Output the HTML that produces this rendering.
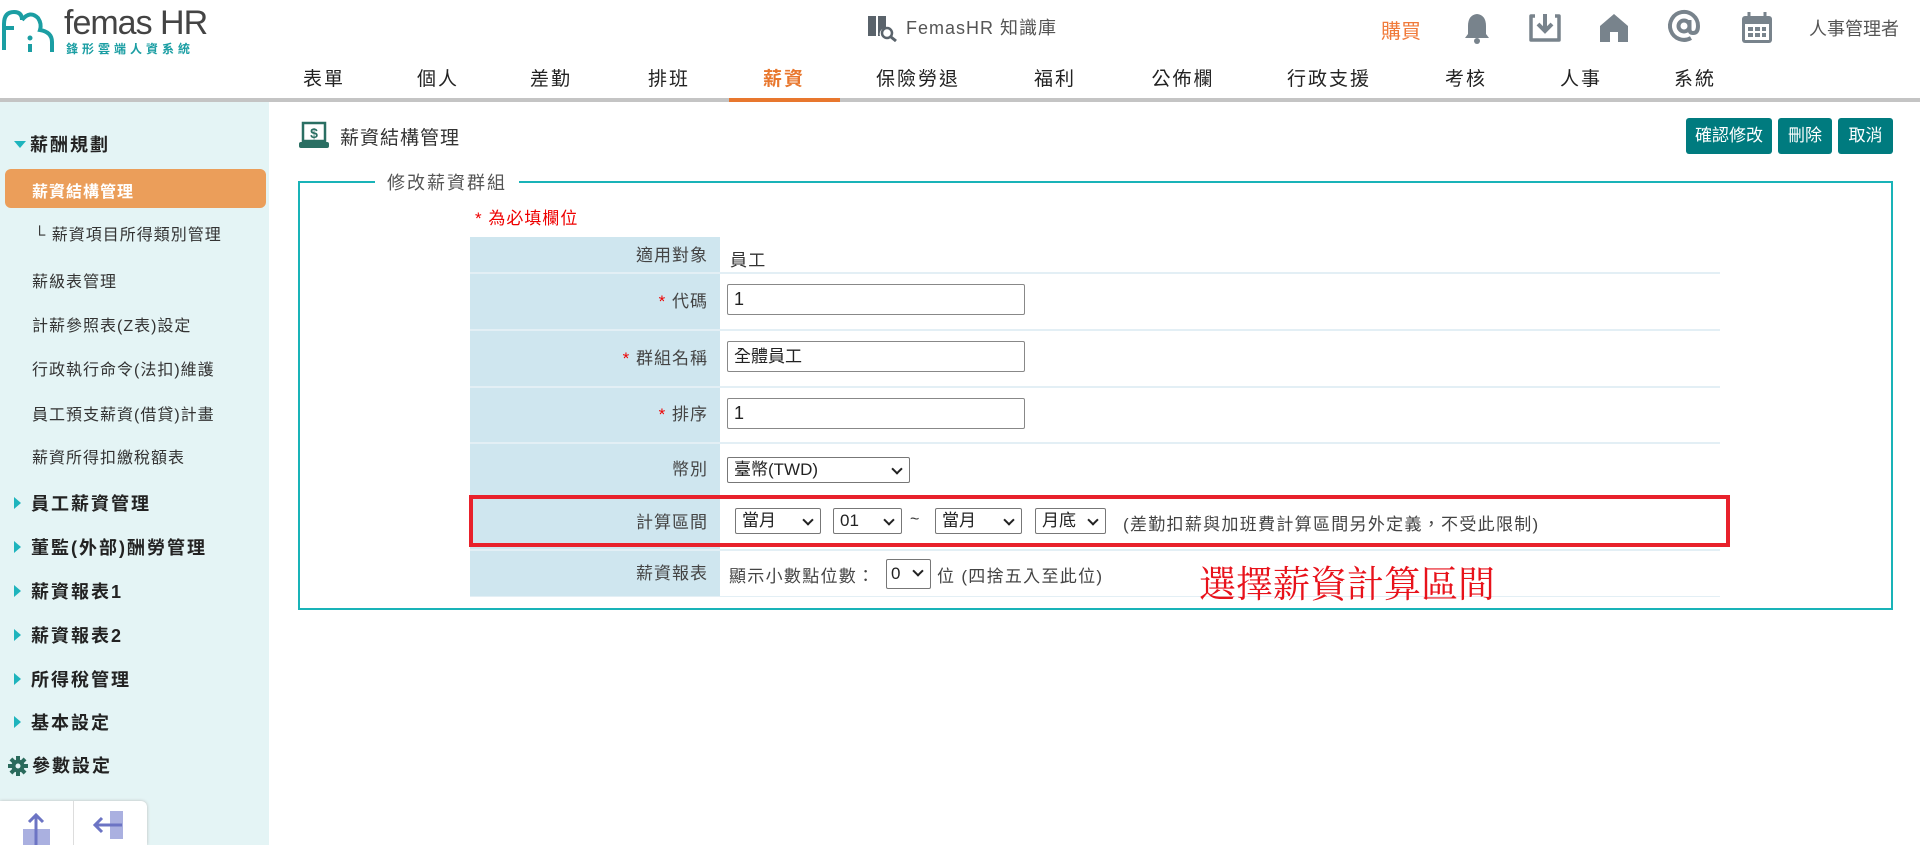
<!DOCTYPE html>
<html><head><meta charset="utf-8"><style>
*{box-sizing:border-box;margin:0;padding:0}
body{width:1920px;height:845px;overflow:hidden;background:#fff;font-family:"Liberation Sans","Noto Sans CJK TC",sans-serif;color:#333;position:relative}
.a{position:absolute;white-space:nowrap}
.nav{top:64px;font-size:19px;color:#222;letter-spacing:2px;transform:translateX(-50%)}
.side{left:32px;font-size:16px;color:#333;letter-spacing:1px}
.grp{left:14px;font-size:18px;color:#222;letter-spacing:2px;font-weight:bold}
.grp:before{content:"";display:inline-block;border-left:7px solid #1eb4bd;border-top:6px solid transparent;border-bottom:6px solid transparent;margin-right:10px;vertical-align:1px}
.btn{top:118px;height:36px;background:#007b7f;color:#fff;font-size:17px;border-radius:3px;text-align:center;line-height:36px}
.lab{left:470px;width:250px;background:#cfe6ef;text-align:right;padding-right:12px;font-size:17px;color:#444;letter-spacing:1px}
.row{left:470px;width:1250px;border-bottom:2px solid #e3eff5}
.inp{left:727px;width:298px;height:31px;border:1px solid #888;border-radius:2px;font-size:18px;padding-left:6px;line-height:29px;color:#222}
.sel{height:26px;border:1px solid #777;border-radius:2px;font-size:17px;padding-left:6px;line-height:24px;color:#222}
.sel:after{content:"";position:absolute;right:8px;top:7px;width:6px;height:6px;border-right:2px solid #222;border-bottom:2px solid #222;transform:rotate(45deg)}
.req{color:#e00}
.t{font-size:17px;color:#444;letter-spacing:1.3px}
</style></head><body>
<!-- header -->
<svg class="a" style="left:0;top:6px" width="60" height="48" viewBox="0 0 60 48"><path d="M4 44 V18 Q4 6 14 6 Q22 6 22 14 M4 22 H14" fill="none" stroke="#1b9ea3" stroke-width="4"/><path d="M22 14 Q30 4 38 12 Q42 18 40 24 Q52 26 52 36 V46" fill="none" stroke="#1b9ea3" stroke-width="4"/><circle cx="30" cy="32" r="2.5" fill="#1b9ea3"/><path d="M30 38 V46" stroke="#1b9ea3" stroke-width="4"/></svg>
<div class="a" style="left:64px;top:4px;font-size:34px;color:#444;letter-spacing:-1px">femas HR</div>
<div class="a" style="left:66px;top:40px;font-size:12px;color:#1b9ea3;letter-spacing:4px;font-weight:bold">鋒形雲端人資系統</div>
<svg class="a" style="left:866px;top:14px" width="32" height="28" viewBox="0 0 32 28"><path d="M2 2 H10 V22 H2Z M12 2 H20 V14 A6 6 0 0 0 14 22 H12Z" fill="#5a636b"/><circle cx="21" cy="19" r="5" fill="none" stroke="#5a636b" stroke-width="2.5"/><path d="M25 23 L30 27" stroke="#5a636b" stroke-width="3"/></svg>
<div class="a" style="left:906px;top:14px;font-size:18px;color:#555;letter-spacing:1px">FemasHR 知識庫</div>
<div class="a" style="left:1381px;top:15px;font-size:20px;color:#f07a3a">購買</div>
<svg class="a" style="left:1462px;top:12px" width="30" height="32" viewBox="0 0 30 32"><path d="M15 2 Q6 3 6 14 V22 L3 26 H27 L24 22 V14 Q24 3 15 2Z" fill="#78838c"/><circle cx="15" cy="29" r="3" fill="#78838c"/></svg>
<svg class="a" style="left:1527px;top:12px" width="36" height="32" viewBox="0 0 36 32"><path d="M8 4 H4 V28 H32 V4 H28" fill="none" stroke="#78838c" stroke-width="3.5" stroke-linejoin="round"/><path d="M18 2 V18 M11 12 L18 19 L25 12" fill="none" stroke="#78838c" stroke-width="4"/></svg>
<svg class="a" style="left:1598px;top:12px" width="32" height="32" viewBox="0 0 32 32"><path d="M16 2 L30 14 V30 H20 V20 H12 V30 H2 V14Z" fill="#78838c"/></svg>
<svg class="a" style="left:1666px;top:8px" width="36" height="36" viewBox="0 0 36 36"><circle cx="18" cy="18" r="5.5" fill="none" stroke="#78838c" stroke-width="4"/><path d="M23.5 12 V21 Q23.5 25 27 25 Q32 25 32 18 A14 14 0 1 0 25 30" fill="none" stroke="#78838c" stroke-width="4"/></svg>
<svg class="a" style="left:1740px;top:11px" width="34" height="34" viewBox="0 0 34 34"><rect x="2" y="5" width="30" height="27" rx="3" fill="#78838c"/><rect x="5" y="13" width="24" height="16" fill="#fff"/><path d="M9 1V7 M25 1V7" stroke="#78838c" stroke-width="3"/><g fill="#78838c"><rect x="8" y="16" width="5" height="4"/><rect x="15" y="16" width="5" height="4"/><rect x="22" y="16" width="4" height="4"/><rect x="8" y="22" width="5" height="4"/><rect x="15" y="22" width="5" height="4"/><rect x="22" y="22" width="4" height="4"/></g></svg>
<div class="a" style="left:1809px;top:15px;font-size:18px;color:#555">人事管理者</div>
<div class="a nav" style="left:324px">表單</div>
<div class="a nav" style="left:438px">個人</div>
<div class="a nav" style="left:551px">差勤</div>
<div class="a nav" style="left:669px">排班</div>
<div class="a nav" style="left:784px;color:#e8772e;font-weight:bold">薪資</div>
<div class="a nav" style="left:918px">保險勞退</div>
<div class="a nav" style="left:1055px">福利</div>
<div class="a nav" style="left:1183px">公佈欄</div>
<div class="a nav" style="left:1329px">行政支援</div>
<div class="a nav" style="left:1466px">考核</div>
<div class="a nav" style="left:1581px">人事</div>
<div class="a nav" style="left:1695px">系統</div>
<div class="a" style="left:0;top:98px;width:1920px;height:4px;background:#c4c4c4"></div>
<div class="a" style="left:729px;top:98px;width:111px;height:4px;background:#e8772e"></div>
<!-- sidebar -->
<div class="a" style="left:0;top:102px;width:269px;height:743px;background:#e4f4f5"></div>
<div class="a" style="left:14px;top:131px;font-size:18px;font-weight:bold;color:#222;letter-spacing:2px"><span style="display:inline-block;border-top:7px solid #1eb4bd;border-left:6px solid transparent;border-right:6px solid transparent;margin-right:4px;vertical-align:3px"></span>薪酬規劃</div>
<div class="a" style="left:5px;top:169px;width:261px;height:39px;background:#eb9e5a;border-radius:6px"></div>
<div class="a side" style="top:178px;color:#fff;font-weight:bold">薪資結構管理</div>
<div class="a side" style="top:221px;left:34px">└ 薪資項目所得類別管理</div>
<div class="a side" style="top:268px">薪級表管理</div>
<div class="a side" style="top:312px">計薪參照表(Z表)設定</div>
<div class="a side" style="top:356px">行政執行命令(法扣)維護</div>
<div class="a side" style="top:401px">員工預支薪資(借貸)計畫</div>
<div class="a side" style="top:444px">薪資所得扣繳稅額表</div>
<div class="a grp" style="top:490px">員工薪資管理</div>
<div class="a grp" style="top:534px">董監(外部)酬勞管理</div>
<div class="a grp" style="top:578px">薪資報表1</div>
<div class="a grp" style="top:622px">薪資報表2</div>
<div class="a grp" style="top:666px">所得稅管理</div>
<div class="a grp" style="top:709px">基本設定</div>
<svg class="a" style="left:8px;top:756px" width="20" height="20" viewBox="0 0 20 20"><g fill="#2a6a5c"><circle cx="10" cy="10" r="6.5"/><rect x="8" y="0" width="4" height="20"/><rect x="0" y="8" width="20" height="4"/><rect x="8" y="0" width="4" height="20" transform="rotate(45 10 10)"/><rect x="8" y="0" width="4" height="20" transform="rotate(-45 10 10)"/></g><circle cx="10" cy="10" r="2.5" fill="#e4f4f5"/></svg>
<div class="a" style="left:32px;top:752px;font-size:18px;font-weight:bold;color:#222;letter-spacing:2px">參數設定</div>
<div class="a" style="left:0;top:801px;width:147px;height:44px;background:#fff;border-radius:0 6px 0 0;box-shadow:0 0 3px #bbb"></div>
<div class="a" style="left:73px;top:801px;width:1px;height:44px;background:#ddd"></div>
<svg class="a" style="left:22px;top:812px" width="30" height="33" viewBox="0 0 30 33"><rect x="1" y="17" width="27" height="16" fill="#aab0e0"/><path d="M14 3 V33 M7 10 L14 3 L21 10" fill="none" stroke="#6c74c4" stroke-width="3"/></svg>
<svg class="a" style="left:92px;top:811px" width="32" height="30" viewBox="0 0 32 30"><rect x="18" y="0" width="13" height="28" fill="#aab0e0"/><path d="M30 14 H3 M10 7 L3 14 L10 21" fill="none" stroke="#6c74c4" stroke-width="3"/></svg>
<!-- title -->
<svg class="a" style="left:299px;top:121px" width="30" height="28" viewBox="0 0 30 28"><rect x="4" y="2" width="22" height="18" fill="none" stroke="#2a6f63" stroke-width="2.5"/><rect x="0" y="21" width="30" height="6" rx="2" fill="#2a6f63"/><text x="15" y="17" font-size="14" font-weight="bold" text-anchor="middle" fill="#2a6f63" font-family="Liberation Sans">$</text></svg>
<div class="a" style="left:340px;top:123px;font-size:19px;color:#333;letter-spacing:1px">薪資結構管理</div>
<div class="a btn" style="left:1686px;width:86px">確認修改</div>
<div class="a btn" style="left:1778px;width:54px">刪除</div>
<div class="a btn" style="left:1838px;width:55px">取消</div>
<!-- fieldset -->
<div class="a" style="left:298px;top:181px;width:1595px;height:429px;border:2px solid #19b3b8"></div>
<div class="a" style="left:375px;top:169px;background:#fff;padding:0 12px;font-size:18px;color:#555;letter-spacing:2px">修改薪資群組</div>
<div class="a" style="left:475px;top:204px;font-size:17px;color:#e00;letter-spacing:1px">* 為必填欄位</div>
<div class="a row" style="top:237px;height:37px"></div>
<div class="a lab" style="top:237px;height:35px;line-height:38px">適用對象</div>
<div class="a t" style="left:730px;top:246px;color:#333">員工</div>
<div class="a row" style="top:274px;height:57px"></div>
<div class="a lab" style="top:274px;height:55px;line-height:55px"><span class="req">* </span>代碼</div>
<div class="a inp" style="top:284px">1</div>
<div class="a row" style="top:331px;height:57px"></div>
<div class="a lab" style="top:331px;height:55px;line-height:55px"><span class="req">* </span>群組名稱</div>
<div class="a inp" style="top:341px;font-size:17px">全體員工</div>
<div class="a row" style="top:388px;height:56px"></div>
<div class="a lab" style="top:388px;height:54px;line-height:54px"><span class="req">* </span>排序</div>
<div class="a inp" style="top:398px">1</div>
<div class="a row" style="top:444px;height:53px"></div>
<div class="a lab" style="top:444px;height:51px;line-height:51px">幣別</div>
<div class="a sel" style="left:727px;top:457px;width:183px">臺幣(TWD)</div>
<div class="a row" style="top:497px;height:54px"></div>
<div class="a lab" style="top:497px;height:52px;line-height:52px">計算區間</div>
<div class="a sel" style="left:735px;top:508px;width:86px">當月</div>
<div class="a sel" style="left:833px;top:508px;width:69px">01</div>
<div class="a" style="left:910px;top:511px;font-size:16px">~</div>
<div class="a sel" style="left:935px;top:508px;width:87px">當月</div>
<div class="a sel" style="left:1035px;top:508px;width:71px">月底</div>
<div class="a t" style="left:1123px;top:510px">(差勤扣薪與加班費計算區間另外定義，不受此限制)</div>
<div class="a" style="left:469px;top:495px;width:1261px;height:52px;border:4px solid #e8212b"></div>
<div class="a row" style="top:551px;height:46px;border-bottom-width:1px"></div>
<div class="a lab" style="top:551px;height:45px;line-height:45px">薪資報表</div>
<div class="a t" style="left:729px;top:562px">顯示小數點位數：</div>
<div class="a sel" style="left:886px;top:559px;width:45px;height:30px;line-height:28px;padding-left:4px">0</div>
<div class="a t" style="left:937px;top:562px">位 (四捨五入至此位)</div>
<div class="a" style="left:1199px;top:554px;font-size:37px;color:#e8121b;font-family:'Liberation Serif','Noto Serif CJK SC',serif">選擇薪資計算區間</div>
</body></html>
